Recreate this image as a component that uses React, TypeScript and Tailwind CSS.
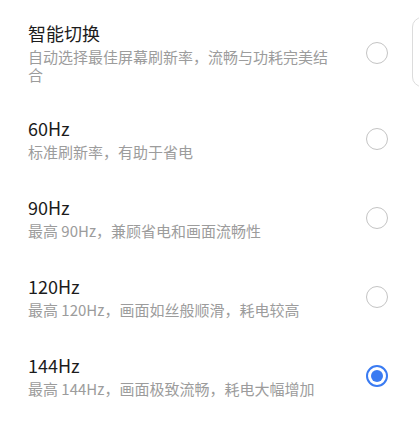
import React, { useState } from 'react';

interface Option {
  id: string;
  title: string;
  desc: string;
}

const options: Option[] = [
  { id: 'auto', title: '智能切换', desc: '自动选择最佳屏幕刷新率，流畅与功耗完美结合' },
  { id: '60', title: '60Hz', desc: '标准刷新率，有助于省电' },
  { id: '90', title: '90Hz', desc: '最高 90Hz，兼顾省电和画面流畅性' },
  { id: '120', title: '120Hz', desc: '最高 120Hz，画面如丝般顺滑，耗电较高' },
  { id: '144', title: '144Hz', desc: '最高 144Hz，画面极致流畅，耗电大幅增加' },
];

const Radio = ({ checked }: { checked: boolean }) =>
  checked ? (
    <div className="flex h-[22px] w-[22px] items-center justify-center rounded-full border-2 border-[#3a7bf2]">
      <div className="h-[12px] w-[12px] rounded-full bg-[#3a7bf2]" />
    </div>
  ) : (
    <div className="h-[22px] w-[22px] rounded-full border-[1.5px] border-[#c4c4c4]" />
  );

export default function App() {
  const [selected, setSelected] = useState('144');

  return (
    <main
      className="relative h-[425px] w-[419px] overflow-hidden bg-white pt-[5px]"
      style={{ fontFamily: '"Noto Sans CJK SC", "Noto Sans", sans-serif' }}
    >
      {/* edge of the next card, cut off by the screen */}
      <div className="absolute left-[412px] top-[17px] h-[70px] w-[24px] rounded-[10px] border border-[#dcdcdc]" />

      <div className="flex flex-col">
        {options.map((o) => (
          <button
            key={o.id}
            onClick={() => setSelected(o.id)}
            className="flex items-center pt-[17px] pb-[18px] first:pb-[16px] pl-[28px] pr-[31px] text-left"
          >
            <div className="flex-1 pr-[30px]">
              <div className="text-[18px] leading-[22px] text-[#1c1c1c]">{o.title}</div>
              <div className="mt-[4px] text-[15px] leading-[18px] text-[#9c9c9c]">{o.desc}</div>
            </div>
            <Radio checked={selected === o.id} />
          </button>
        ))}
      </div>
    </main>
  );
}
